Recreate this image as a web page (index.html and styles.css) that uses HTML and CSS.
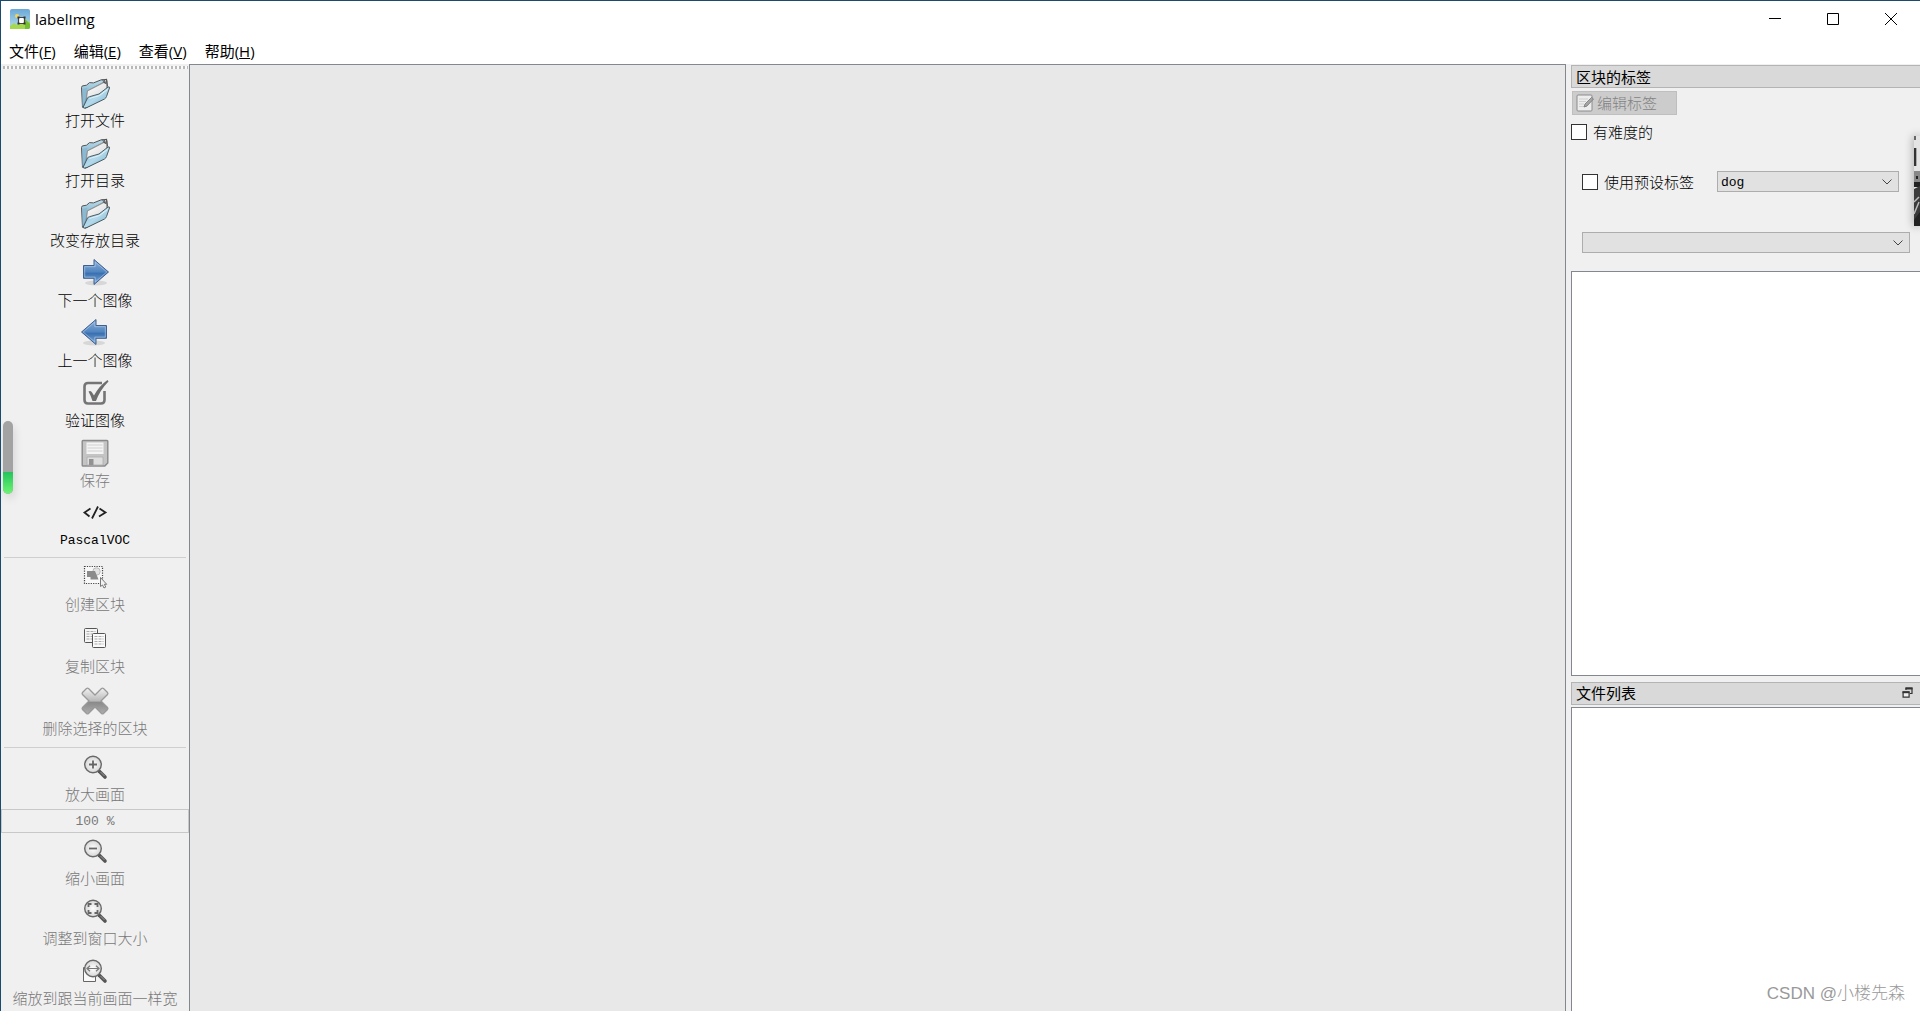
FILE: index.html
```html
<!DOCTYPE html>
<html lang="zh-CN">
<head>
  <meta charset="UTF-8" />
  <meta name="viewport" content="width=device-width, initial-scale=1.0" />
  <title>labelImg</title>
  <link rel="stylesheet" href="styles.css">
</head>
<body>
  <!-- Shared icon shapes -->
  <svg class="defs" width="0" height="0" aria-hidden="true">
    <defs>
      <linearGradient id="folderBack" x1="0" y1="0" x2="0" y2="1"><stop offset="0" stop-color="#b9dcec"/><stop offset="1" stop-color="#5d93b2"/></linearGradient>
      <linearGradient id="folderFront" x1="0" y1="0" x2="1" y2="1"><stop offset="0" stop-color="#78b4d2"/><stop offset=".5" stop-color="#b4daeb"/><stop offset="1" stop-color="#6fabc9"/></linearGradient>
      <linearGradient id="paper" x1="0" y1="0" x2="1" y2="1"><stop offset="0" stop-color="#fff"/><stop offset="1" stop-color="#d8d8d8"/></linearGradient>
      <linearGradient id="arrowFill" x1="0" y1="0" x2="0" y2="1"><stop offset="0" stop-color="#8fb0d8"/><stop offset=".5" stop-color="#4f84c0"/><stop offset=".55" stop-color="#3a70b0"/><stop offset="1" stop-color="#7fabd9"/></linearGradient>
      <linearGradient id="greyFill" x1="0" y1="0" x2="0" y2="1"><stop offset="0" stop-color="#f2f2f2"/><stop offset=".5" stop-color="#b8b8b8"/><stop offset=".55" stop-color="#8a8a8a"/><stop offset="1" stop-color="#adadad"/></linearGradient>
      <radialGradient id="lens"><stop offset="0" stop-color="#fff"/><stop offset="1" stop-color="#d6d6d6"/></radialGradient>
      <linearGradient id="sky" x1="0" y1="0" x2="0" y2="1"><stop offset="0" stop-color="#6aa9d6"/><stop offset="1" stop-color="#b5dcec"/></linearGradient>
    </defs>
    <symbol id="i-folder" viewBox="0 0 32 32">
      <path d="M2.500 10.500q0-1.500 1.500-1.700l3.500-.6 3-2.600 4 .3 8-3.200 3 .5.500 17-19.500 11-3-1z" fill="url(#folderBack)" stroke="#555" stroke-width="1"/>
      <path d="M3.500 30V12l5-1.500L6 24z" fill="#8ab9d1"/>
      <path d="M6 28 8 13.500l16-8.500 4.500-1.500V16z" fill="#8c979c"/>
      <path d="M7.500 22 8.500 14 25 5.500l3 1.500-1 10z" fill="url(#paper)" stroke="#858585" stroke-width=".7"/>
      <path d="M22.500 3l5-.5 1 7M24 4.500l3 2" fill="none" stroke="#555" stroke-width="1.200"/>
      <path d="M4 30.500 8.500 21q.5-1 2-1.300L20 17l9-7q1.800-.6 1.500 1L27.500 19.500q-.5 1.500-2 2.500L8 30.500q-3 1-4 0z" fill="url(#folderFront)" stroke="#4d5c64" stroke-width="1"/>
      <path d="M10.500 21.500l10-3 8-6" fill="none" stroke="#e1f2f9" stroke-width="1"/>
    </symbol>
    <symbol id="i-arrow" viewBox="0 1 32 32">
      <ellipse cx="17" cy="27" rx="11" ry="2.500" fill="#000" opacity=".1"/>
      <path d="M4.500 9.500h10.500V3.500L29.500 16 15 28.500v-6.200H4.500z" fill="url(#arrowFill)" stroke="#3d6090" stroke-width="1"/>
      <path d="M5.700 10.700h10.500V6L27.800 16 16.200 26v-4.900H5.700z" fill="none" stroke="#b5cdea" stroke-width="1" opacity=".6"/>
    </symbol>
    <symbol id="i-verify" viewBox="0 0 32 32">
      <path d="M23 6H9q-3.500 0-3.500 3.500V23q0 3.500 3.500 3.500h13q3.500 0 3.500-3.500v-9" fill="none" stroke="#757575" stroke-width="2.600"/>
      <path d="M9.500 14.500q2-1 3.200.5l2.300 3.500Q20 9 28.500 3l1 1.500Q21 13 17 24h-3.500q-1.500-5-4-9.500z" fill="#6e6e6e"/>
    </symbol>
    <symbol id="i-save" viewBox="0 0 32 32">
      <path d="M4 3.500h24q.8 0 .8.800V26l-3 3H4q-.8 0-.8-.8V4.300q0-.8.800-.8z" fill="#c4c4c4" stroke="#8a8a8a" stroke-width="1.400"/>
      <path d="M7.500 5.500h17V17h-17z" fill="#f4f4f4"/>
      <path d="M8.500 8h15M8.500 11h15M8.500 14h15" stroke="#cfcfcf" stroke-width="1.200"/>
      <path d="M8 20h16v8H8z" fill="#dedede" stroke="#adadad" stroke-width=".8"/>
      <path d="M10 22h4.500v6H10z" fill="#929292"/>
    </symbol>
    <symbol id="i-code" viewBox="0 0 32 32">
      <path d="M11.500 11.500 5.500 15.500l5 4M20.500 11.500l6 4-6.500 4M19 9.500l-6 12" fill="none" stroke="#222" stroke-width="1.800"/>
    </symbol>
    <symbol id="i-create" viewBox="0 0 32 32">
      <path d="M5.500 5.500h18v17h-18z" fill="#f8f8f8" stroke="#444" stroke-width="1.200" stroke-dasharray="1.200 1.200"/>
      <circle cx="17.500" cy="10.500" r="3.700" fill="#e2e2e2" stroke="#bababa"/>
      <path d="M8 10h8l3.500 8.500h-8V16H8z" fill="#8b8b8b"/>
      <path d="M21.500 16.500v9l2-1.500 1.500 3 1.800-1-1.500-2.700h2.400z" fill="#f2f2f2" stroke="#777"/>
    </symbol>
    <symbol id="i-copy" viewBox="0 0 32 32">
      <rect x="5.500" y="5.500" width="13" height="14" rx="1" fill="#f5f5f5" stroke="#555"/>
      <path d="M7.500 8.500h9M7.500 11h6M7.500 13.500h6M7.500 16h6" stroke="#aaa" stroke-dasharray="3 1"/>
      <rect x="13.500" y="10.500" width="13" height="14" rx="1" fill="#fafafa" stroke="#555"/>
      <path d="M15.500 13.500h9M15.500 16h9M15.500 18.500h9M15.500 21h9" stroke="#aaa" stroke-dasharray="3 1"/>
    </symbol>
    <symbol id="i-delete" viewBox="0 0 32 32">
      <path d="M3.500 7.500 7.500 3.500q1-.8 2 0l6.500 6.500 6.500-6.500q1-.8 2 0l4 4q.8 1 0 2L22 16l6.500 6.500q.8 1 0 2l-4 4q-1 .8-2 0L16 22l-6.500 6.500q-1 .8-2 0l-4-4q-.8-1 0-2L10 16 3.500 9.500q-.8-1 0-2z" fill="url(#greyFill)" stroke="#999" stroke-width="1.300"/>
    </symbol>
    <symbol id="i-glass" viewBox="0 0 32 32">
      <path d="M20 20l6 6" stroke="#555" stroke-width="3.600" stroke-linecap="round"/>
      <path d="M21.500 21l4 4" stroke="#999" stroke-width="1"/>
      <circle cx="14" cy="13.500" r="8.300" fill="url(#lens)" stroke="#686868" stroke-width="1.400"/>
    </symbol>
    <symbol id="i-zoom-in" viewBox="0 0 32 32">
      <use href="#i-glass"/>
      <path d="M10 13.500h8M14 9.500v8" stroke="#666" stroke-width="1.800"/>
    </symbol>
    <symbol id="i-zoom-out" viewBox="0 0 32 32">
      <use href="#i-glass"/>
      <path d="M10 13.500h8" stroke="#666" stroke-width="1.800"/>
    </symbol>
    <symbol id="i-fit" viewBox="0 0 32 32">
      <use href="#i-glass"/>
      <path d="M9.500 12V9h3M15.500 9h3v3M18.500 15v3h-3M12.500 18h-3v-3" fill="none" stroke="#666" stroke-width="1.800"/>
    </symbol>
    <symbol id="i-fit-width" viewBox="0 0 32 32">
      <path d="M4.500 12.500h12v14h-12z" fill="#fafafa" stroke="#666"/>
      <use href="#i-glass"/>
      <path d="M9 13.500h10M11 10.800l-3 2.700 3 2.700M17 10.800l3 2.700-3 2.700" fill="none" stroke="#777" stroke-width="1.200"/>
    </symbol>
  </svg>

  <div class="window">
    <header class="titlebar">
      <svg class="app-icon" viewBox="0 0 20 20" aria-hidden="true">
        <rect width="20" height="20" rx="2" fill="url(#sky)"/>
        <path d="M0 20v-3l4-3 3 2 6-5 7 2v5q0 2-2 2z" fill="#a5d84f"/>
        <path d="M15 10l5 5v3q0 2-2 2h-3z" fill="#74bd35"/>
        <circle cx="7" cy="7" r="2" fill="#f4d45c"/>
        <path d="M8.500 8.500h6v6h-6z" fill="#fff" stroke="#444" stroke-width="1.200"/>
        <path d="M7.500 7.500h2v2h-2zM13.500 7.500h2v2h-2zM7.500 13.500h2v2h-2zM13.500 13.500h2v2h-2z" fill="#333"/>
      </svg>
      <h1 class="app-name">labelImg</h1>
      <div class="window-controls">
        <button type="button" aria-label="最小化"><svg viewBox="0 0 12 12"><path d="M0 5.500h12"/></svg></button>
        <button type="button" aria-label="最大化"><svg viewBox="0 0 12 12"><path d="M.5.500h11v11H.5z"/></svg></button>
        <button type="button" aria-label="关闭"><svg viewBox="0 0 12 12"><path d="M0 0l12 12M12 0 0 12"/></svg></button>
      </div>
    </header>

    <nav class="menubar">
      <button type="button">文件(<u>F</u>)</button>
      <button type="button">编辑(<u>E</u>)</button>
      <button type="button">查看(<u>V</u>)</button>
      <button type="button">帮助(<u>H</u>)</button>
    </nav>

    <div class="workspace">
      <aside class="toolbar">
        <div class="handle"></div>
        <div class="tools">
          <button type="button" class="tool"><svg class="icon"><use href="#i-folder"/></svg><span>打开文件</span></button>
          <button type="button" class="tool"><svg class="icon"><use href="#i-folder"/></svg><span>打开目录</span></button>
          <button type="button" class="tool"><svg class="icon"><use href="#i-folder"/></svg><span>改变存放目录</span></button>
          <button type="button" class="tool"><svg class="icon"><use href="#i-arrow"/></svg><span>下一个图像</span></button>
          <button type="button" class="tool"><svg class="icon flip"><use href="#i-arrow"/></svg><span>上一个图像</span></button>
          <button type="button" class="tool"><svg class="icon"><use href="#i-verify"/></svg><span>验证图像</span></button>
          <button type="button" class="tool" disabled><svg class="icon"><use href="#i-save"/></svg><span>保存</span></button>
          <button type="button" class="tool"><svg class="icon"><use href="#i-code"/></svg><span class="latin">PascalVOC</span></button>
        </div>
        <hr>
        <div class="tools shapes">
          <button type="button" class="tool" disabled><svg class="icon"><use href="#i-create"/></svg><span>创建区块</span></button>
          <button type="button" class="tool" disabled><svg class="icon"><use href="#i-copy"/></svg><span>复制区块</span></button>
          <button type="button" class="tool" disabled><svg class="icon"><use href="#i-delete"/></svg><span>删除选择的区块</span></button>
        </div>
        <hr>
        <div class="tools">
          <button type="button" class="tool" disabled><svg class="icon"><use href="#i-zoom-in"/></svg><span>放大画面</span></button>
          <input class="zoom-value latin" type="text" value="100 %" aria-label="缩放" disabled>
          <button type="button" class="tool" disabled><svg class="icon"><use href="#i-zoom-out"/></svg><span>缩小画面</span></button>
          <button type="button" class="tool" disabled><svg class="icon"><use href="#i-fit"/></svg><span>调整到窗口大小</span></button>
          <button type="button" class="tool" disabled><svg class="icon"><use href="#i-fit-width"/></svg><span>缩放到跟当前画面一样宽</span></button>
        </div>
      </aside>

      <main class="canvas"></main>

      <aside class="docks">
        <section class="dock labels-dock">
          <h2 class="dock-title">区块的标签</h2>
          <div class="dock-form">
            <button type="button" class="edit-label" disabled>
              <svg viewBox="0 0 18 18" aria-hidden="true">
                <rect x="1" y="1" width="15" height="16" rx="1" fill="#ededed" stroke="#8c8c8c"/>
                <path d="M3 5h9M3 7.500h7M3 10h5M3 12.500h8" stroke="#cfcfcf"/>
                <path d="M8 13l1-3 6.500-6.500 2 1.500-6.500 7z" fill="#a5a5a5" stroke="#777" stroke-width=".8"/>
              </svg>
              <span>编辑标签</span>
            </button>
            <label class="check"><input type="checkbox"><span>有难度的</span></label>
            <div class="default-label">
              <label class="check"><input type="checkbox"><span>使用预设标签</span></label>
              <select class="latin" aria-label="预设标签"><option>dog</option></select>
            </div>
            <div class="filter">
              <select class="latin" aria-label="标签筛选"><option></option></select>
            </div>
          </div>
          <div class="list"></div>
        </section>
        <section class="dock files-dock">
          <h2 class="dock-title">文件列表
            <button type="button" class="float-btn" aria-label="浮动">
              <svg viewBox="0 0 10 11"><path d="M3.500 3V1h6v5.500H7.500" fill="none" stroke="#333" stroke-width="1.200"/><path d="M3 1.500h7" stroke="#333" stroke-width="2"/><path d="M.6 5h6v5.200h-6z" fill="#eee" stroke="#333" stroke-width="1.200"/><path d="M0 5.200h7" stroke="#333" stroke-width="2"/></svg>
            </button>
          </h2>
          <div class="list"></div>
        </section>
      </aside>
    </div>

    <!-- Desktop widgets floating over the window -->
    <div class="gauge"><div class="gauge-fill"></div></div>
    <svg class="thumb" viewBox="0 0 6 90" aria-hidden="true">
      <rect width="6" height="90" fill="#e4e4e4"/>
      <path d="M0 0h2v4H0z" fill="#666"/>
      <path d="M0 12h2v18H0z" fill="#333"/>
      <path d="M2 12h1v18H2z" fill="#aaa"/>
      <path d="M0 35h6v12H0z" fill="#888"/>
      <path d="M2 40h2v3H2zM0 46h6v5H0z" fill="#222"/>
      <path d="M0 53l6-3v40H0z" fill="#3a3a3a"/>
      <path d="M0 66l5-5M0 78l5-12" stroke="#bbb" stroke-width="1.500"/>
      <path d="M0 84l6-8v14H0z" fill="#222"/>
    </svg>
    <div class="watermark">CSDN @小楼先森</div>
  </div>
</body>
</html>
```

FILE: styles.css
```css
:root {
  --face: #f0f0f0;
  --frame: #828790;
  --line: #adadad;
  --disabled: #787878;
  --ui: "Open Sans", "Noto Sans CJK SC", sans-serif;
  --cjk: "Noto Sans CJK SC", sans-serif;
  --mono: "Liberation Mono", "Noto Sans CJK SC", monospace;
}
*, *::before, *::after { box-sizing: border-box; }
html, body { margin: 0; height: 100%; overflow: hidden; }
body { font: 300 15px/20px var(--cjk); color: #000; background: #fff; }
button, input, select { font: inherit; color: inherit; margin: 0; }
button { background: none; border: none; padding: 0; }
.defs { position: absolute; }

.window {
  position: relative; height: 100vh; overflow: hidden;
  display: flex; flex-direction: column;
  border-top: 1px solid #1b4a70; border-left: 1px solid #1b4a70;
}

/* Title bar and menus */
.titlebar { display: flex; align-items: center; height: 36px; padding-left: 9px; flex: none; }
.app-icon { width: 20px; height: 20px; margin-right: 5px; }
.app-name { margin: 0; font: 15px/20px var(--ui); }
.window-controls { display: flex; margin-left: auto; }
.window-controls button { width: 58px; height: 36px; display: flex; align-items: center; justify-content: center; }
.window-controls svg { width: 12px; height: 12px; fill: none; stroke: #000; }
.menubar { display: flex; gap: 18px; height: 27px; padding: 0 8px; flex: none; font: 15px/20px var(--ui); }
.menubar button { height: 28px; }

.workspace { display: flex; flex: 1; min-height: 0; background: var(--face); }

/* Toolbar */
.toolbar { width: 188px; flex: none; overflow: hidden; }
.handle { height: 3px; margin: 2px 1px 6px 2px; background: repeating-linear-gradient(90deg, #b8b8b8 0 2px, #fafafa 2px 4px); }
.tools { display: flex; flex-direction: column; }
.tool {
  display: flex; flex-direction: column; align-items: center;
  height: 60px; padding-top: 1px; white-space: nowrap; color: #000;
}
.shapes .tool { height: 62px; }
.tool:disabled { color: var(--disabled); }
.icon { width: 32px; height: 34px; }
.flip { transform: scaleX(-1); }
.latin { font: 13px/22px var(--mono); }
.toolbar hr { height: 1px; margin: 2px 3px 1px; border: none; background: #cfcfcf; }
.zoom-value {
  width: 100%; height: 24px; padding: 0; text-align: center;
  color: var(--disabled); background: var(--face); border: 1px solid #c8c8c8;
}

.canvas { flex: 1; background: #e8e8e8; border: 1px solid var(--frame); border-bottom: none; }

/* Dock panels */
.docks { width: 354px; flex: none; padding: 1px 0 0 5px; display: flex; flex-direction: column; gap: 6px; }
.dock { display: flex; flex-direction: column; min-height: 0; }
.labels-dock { flex: 612; }
.files-dock { flex: 330; }
.dock-title {
  display: flex; align-items: center; height: 23px; flex: none;
  margin: 0; padding: 0 6px 0 4px; font: 15px/20px var(--ui);
  background: #d9d9d9; border: 1px solid #b4b4b4; border-right: none;
}
.float-btn { margin-left: auto; width: 12px; height: 12px; display: flex; }
.float-btn svg { width: 11px; height: 11px; }
.dock-form { display: flex; flex-direction: column; align-items: flex-start; padding-top: 3px; }
.edit-label {
  display: flex; align-items: center; gap: 3px;
  height: 24px; margin-left: 1px; padding: 0 19px 0 3px;
  color: #838383; background: #ccc; border: 1px solid #bfbfbf;
}
.edit-label svg { width: 18px; height: 18px; }
.check { display: flex; align-items: center; gap: 6px; height: 20px; }
.dock-form > .check { margin-top: 7px; }
.check input { appearance: none; width: 16px; height: 16px; background: #fff; border: 1px solid #333; }
.default-label, .filter { display: flex; align-items: center; align-self: stretch; padding-left: 11px; }
.default-label { gap: 23px; margin-top: 29px; padding-right: 21px; }
.filter { margin: 40px 0 18px; padding-right: 10px; }
.docks select {
  flex: 1; min-width: 0; height: 21px; padding: 0 3px; appearance: none;
  border: 1px solid var(--line); border-radius: 0;
  background: #e1e1e1 url("data:image/svg+xml,%3Csvg xmlns='http://www.w3.org/2000/svg' width='10' height='6'%3E%3Cpath d='M.5.500 5 5 9.500.500' fill='none' stroke='%23444'/%3E%3C/svg%3E") no-repeat right 6px center;
}
.list { flex: 1; background: #fff; border: 1px solid var(--frame); border-right: none; }
.files-dock .list { margin-top: 2px; border-bottom: none; }

/* Overlays */
.gauge {
  position: absolute; left: 2px; top: 420px; width: 10px; height: 73px;
  display: flex; align-items: flex-end; overflow: hidden;
  background: #a3a3a3; border-radius: 5px; box-shadow: 2px 5px 8px rgba(0,0,0,.1);
}
.gauge-fill { width: 100%; height: 30%; background: linear-gradient(#23c45c, #6ff573); border-radius: 0 0 5px 5px; }
.thumb { position: absolute; right: 0; top: 135px; width: 6px; height: 90px; box-shadow: 0 0 10px rgba(0,0,0,.4); }
.watermark { position: absolute; right: 15px; bottom: 6px; font: 300 17px/22px "Liberation Sans", "Noto Sans CJK SC", sans-serif; color: #999; }
```
